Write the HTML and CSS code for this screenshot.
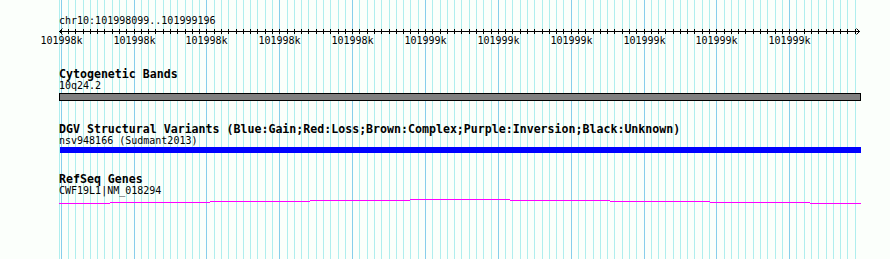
FILE: index.html
```html
<!DOCTYPE html>
<html>
<head>
<meta charset="utf-8">
<link rel="stylesheet" href="styles.css">
</head>
<body>
<div class="browser">
  <svg class="grid" width="890" height="259" viewBox="0 0 890 259" shape-rendering="crispEdges">
    <path class="grid-minor" d="M59.5 0v259M68.5 0v259M75.5 0v259M83.5 0v259M90.5 0v259M97.5 0v259M104.5 0v259M112.5 0v259M119.5 0v259M126.5 0v259M141.5 0v259M148.5 0v259M155.5 0v259M163.5 0v259M170.5 0v259M177.5 0v259M185.5 0v259M192.5 0v259M199.5 0v259M214.5 0v259M221.5 0v259M228.5 0v259M236.5 0v259M243.5 0v259M250.5 0v259M257.5 0v259M265.5 0v259M272.5 0v259M287.5 0v259M294.5 0v259M301.5 0v259M308.5 0v259M316.5 0v259M323.5 0v259M330.5 0v259M338.5 0v259M345.5 0v259M359.5 0v259M367.5 0v259M374.5 0v259M381.5 0v259M389.5 0v259M396.5 0v259M403.5 0v259M410.5 0v259M418.5 0v259M432.5 0v259M440.5 0v259M447.5 0v259M454.5 0v259M461.5 0v259M469.5 0v259M476.5 0v259M483.5 0v259M491.5 0v259M505.5 0v259M512.5 0v259M520.5 0v259M527.5 0v259M534.5 0v259M542.5 0v259M549.5 0v259M556.5 0v259M563.5 0v259M578.5 0v259M585.5 0v259M593.5 0v259M600.5 0v259M607.5 0v259M614.5 0v259M622.5 0v259M629.5 0v259M636.5 0v259M651.5 0v259M658.5 0v259M665.5 0v259M673.5 0v259M680.5 0v259M687.5 0v259M694.5 0v259M702.5 0v259M709.5 0v259M724.5 0v259M731.5 0v259M738.5 0v259M745.5 0v259M753.5 0v259M760.5 0v259M767.5 0v259M775.5 0v259M782.5 0v259M796.5 0v259M804.5 0v259M811.5 0v259M818.5 0v259M826.5 0v259M833.5 0v259M840.5 0v259M847.5 0v259M855.5 0v259"/>
    <path class="grid-major" d="M61.5 0v259M134.5 0v259M206.5 0v259M279.5 0v259M352.5 0v259M425.5 0v259M498.5 0v259M571.5 0v259M644.5 0v259M716.5 0v259M789.5 0v259"/>
  </svg>

  <div class="locus">chr10:101998099..101999196</div>

  <svg class="ruler" width="890" height="20" viewBox="0 0 890 20" shape-rendering="crispEdges">
    <path class="ruler-line" d="M59 4.5H860"/>
    <path class="ruler-line" d="M61.5 2v5M68.5 2v5M75.5 2v5M83.5 2v5M90.5 2v5M97.5 2v5M104.5 2v5M112.5 2v5M119.5 2v5M126.5 2v5M134.5 2v5M141.5 2v5M148.5 2v5M155.5 2v5M163.5 2v5M170.5 2v5M177.5 2v5M185.5 2v5M192.5 2v5M199.5 2v5M206.5 2v5M214.5 2v5M221.5 2v5M228.5 2v5M236.5 2v5M243.5 2v5M250.5 2v5M257.5 2v5M265.5 2v5M272.5 2v5M279.5 2v5M287.5 2v5M294.5 2v5M301.5 2v5M308.5 2v5M316.5 2v5M323.5 2v5M330.5 2v5M338.5 2v5M345.5 2v5M352.5 2v5M359.5 2v5M367.5 2v5M374.5 2v5M381.5 2v5M389.5 2v5M396.5 2v5M403.5 2v5M410.5 2v5M418.5 2v5M425.5 2v5M432.5 2v5M440.5 2v5M447.5 2v5M454.5 2v5M461.5 2v5M469.5 2v5M476.5 2v5M483.5 2v5M491.5 2v5M498.5 2v5M505.5 2v5M512.5 2v5M520.5 2v5M527.5 2v5M534.5 2v5M542.5 2v5M549.5 2v5M556.5 2v5M563.5 2v5M571.5 2v5M578.5 2v5M585.5 2v5M593.5 2v5M600.5 2v5M607.5 2v5M614.5 2v5M622.5 2v5M629.5 2v5M636.5 2v5M644.5 2v5M651.5 2v5M658.5 2v5M665.5 2v5M673.5 2v5M680.5 2v5M687.5 2v5M694.5 2v5M702.5 2v5M709.5 2v5M716.5 2v5M724.5 2v5M731.5 2v5M738.5 2v5M745.5 2v5M753.5 2v5M760.5 2v5M767.5 2v5M775.5 2v5M782.5 2v5M789.5 2v5M796.5 2v5M804.5 2v5M811.5 2v5M818.5 2v5M826.5 2v5M833.5 2v5M840.5 2v5M847.5 2v5M855.5 2v5"/>
    <polyline class="ruler-arrow" points="62.5,1.5 59.5,4.5 62.5,7.5" shape-rendering="auto"/>
    <polyline class="ruler-arrow" points="856.5,1.5 859.5,4.5 856.5,7.5" shape-rendering="auto"/>
    <g class="ruler-labels">
      <text x="61.5" y="17">101998k</text>
      <text x="134.5" y="17">101998k</text>
      <text x="206.5" y="17">101998k</text>
      <text x="279.5" y="17">101998k</text>
      <text x="352.5" y="17">101998k</text>
      <text x="425.5" y="17">101999k</text>
      <text x="498.5" y="17">101999k</text>
      <text x="571.5" y="17">101999k</text>
      <text x="644.5" y="17">101999k</text>
      <text x="716.5" y="17">101999k</text>
      <text x="789.5" y="17">101999k</text>
    </g>
  </svg>

  <section class="track track-cyto">
    <div class="track-name">Cytogenetic Bands</div>
    <div class="feature-label">10q24.2</div>
    <div class="band"></div>
  </section>

  <section class="track track-dgv">
    <div class="track-name">DGV Structural Variants (Blue:Gain;Red:Loss;Brown:Complex;Purple:Inversion;Black:Unknown)</div>
    <div class="feature-label">nsv948166 (Sudmant2013)</div>
    <div class="variant"></div>
  </section>

  <section class="track track-refseq">
    <div class="track-name">RefSeq Genes</div>
    <div class="feature-label">CWF19L1|NM_018294</div>
    <svg class="gene" width="890" height="8" viewBox="0 0 890 8" shape-rendering="crispEdges">
      <path class="gene-line" d="M59 6.5H110M110 5.5H210M210 4.5H310M310 3.5H410M410 2.5H510M510 3.5H610M610 4.5H710M710 5.5H810M810 6.5H861"/>
    </svg>
  </section>
</div>
</body>
</html>
```

FILE: styles.css
```css
html, body {
  margin: 0;
  padding: 0;
  background: #fbfffb;
}

.browser {
  position: relative;
  width: 890px;
  height: 259px;
  overflow: hidden;
  background: #fbfffb;
  font-family: "DejaVu Sans Mono", "Liberation Mono", monospace;
  color: #000;
}

.grid {
  position: absolute;
  left: 0;
  top: 0;
  z-index: 0;
}

.grid-minor {
  stroke: #afeeee;
  stroke-width: 1;
  fill: none;
}

.grid-major {
  stroke: #87ceeb;
  stroke-width: 1;
  fill: none;
}

.locus,
.ruler,
.track {
  position: relative;
  z-index: 1;
}

.locus {
  padding-top: 15px;
  padding-left: 59px;
  font-size: 10px;
  line-height: 12px;
  height: 12px;
}

.ruler {
  display: block;
}

.ruler-line {
  stroke: #000;
  stroke-width: 1;
  fill: none;
}

.ruler-arrow {
  stroke: #000;
  stroke-width: 1;
  fill: none;
}

.ruler-labels text {
  font-family: "DejaVu Sans Mono", "Liberation Mono", monospace;
  font-size: 10px;
  text-anchor: middle;
  fill: #000;
}

.track {
  display: flex;
  flex-direction: column;
  padding-left: 59px;
}

.track-name {
  font-weight: bold;
  font-size: 11.6px;
  line-height: 12px;
  height: 12px;
  white-space: nowrap;
}

.feature-label {
  font-size: 10px;
  line-height: 11px;
  height: 11px;
  white-space: nowrap;
}

.track-cyto {
  margin-top: 21px;
}

.band {
  margin-top: 2px;
  width: 800px;
  height: 6px;
  background: #808080;
  border: 1px solid #000;
}

.track-dgv {
  margin-top: 22px;
}

.variant {
  margin-top: 1px;
  margin-left: 1px;
  width: 801px;
  height: 6px;
  background: #0000ff;
}

.track-refseq {
  margin-top: 20px;
  padding-left: 0;
}

.track-refseq .track-name,
.track-refseq .feature-label {
  padding-left: 59px;
}

.gene {
  display: block;
  margin-top: 1px;
}

.gene-line {
  stroke: #ff00ff;
  stroke-width: 1;
  fill: none;
}
```
